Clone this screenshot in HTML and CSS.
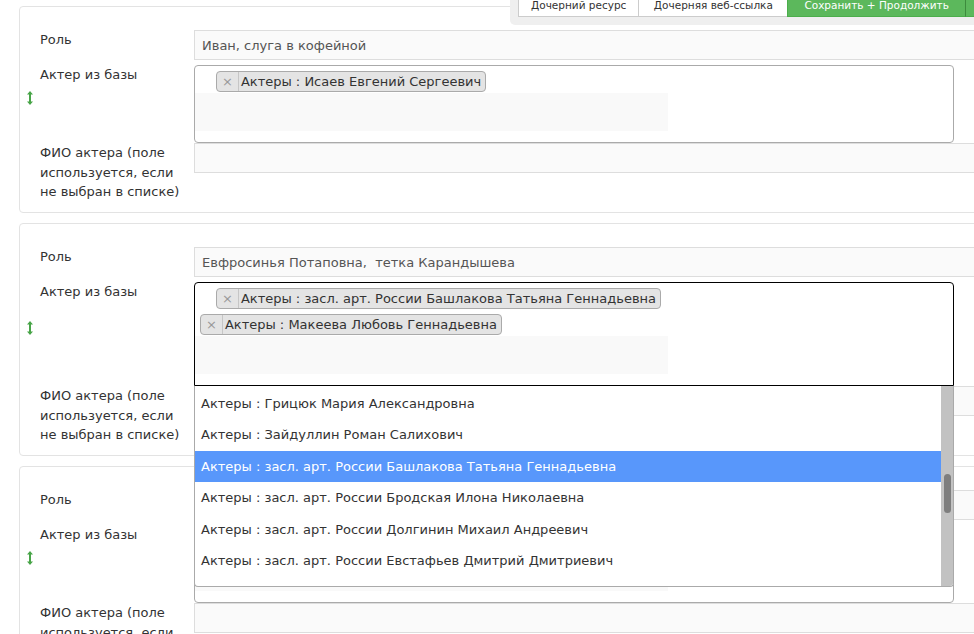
FILE: index.html
```html
<!DOCTYPE html>
<html lang="ru">
<head>
<meta charset="UTF-8">
<meta name="viewport" content="width=device-width, initial-scale=1.0">
<title>Роли спектакля</title>
<link rel="stylesheet" href="styles.css">
</head>
<body>
    <div class="toolbar">
        <button class="tb-btn">Дочерний ресурс</button>
        <button class="tb-btn tb-wide">Дочерняя веб-ссылка</button>
        <button class="tb-btn tb-green tb-wide">Сохранить + Продолжить</button>
        <button class="tb-btn tb-green tb-caret">
            <svg width="9" height="6" viewBox="0 0 9 6"><path d="M1 1 L4.5 4.5 L8 1" fill="none" stroke="#fff" stroke-width="1.6"/></svg>
        </button>
    </div>

    <div class="page">
        <!-- Роль 1 -->
        <div class="panel">
            <div class="row row-text">
                <div class="handle"></div>
                <label class="lbl">Роль</label>
                <div class="field"><input class="text-input" type="text" value="Иван, слуга в кофейной"></div>
            </div>
            <div class="row row-select">
                <div class="handle">
                    <svg width="6" height="14" viewBox="0 0 6 14"><path d="M3 0 L6 3.5 L4 3.5 L4 10.5 L6 10.5 L3 14 L0 10.5 L2 10.5 L2 3.5 L0 3.5 Z" fill="#47a447"/></svg>
                </div>
                <label class="lbl">Актер из базы</label>
                <div class="field">
                    <div class="s2">
                        <div class="s2-tags">
                            <span class="s2-tag first"><span class="s2-x">×</span>Актеры : Исаев Евгений Сергеевич</span>
                        </div>
                        <div class="s2-search"></div>
                    </div>
                </div>
            </div>
            <div class="row">
                <div class="handle"></div>
                <label class="lbl">ФИО актера (поле используется, если не выбран в списке)</label>
                <div class="field"><input class="text-input" type="text" value=""></div>
            </div>
        </div>

        <!-- Роль 2 -->
        <div class="panel">
            <div class="row row-text">
                <div class="handle"></div>
                <label class="lbl">Роль</label>
                <div class="field"><input class="text-input" type="text" value="Евфросинья Потаповна,  тетка Карандышева"></div>
            </div>
            <div class="row row-select">
                <div class="handle">
                    <svg width="6" height="14" viewBox="0 0 6 14"><path d="M3 0 L6 3.5 L4 3.5 L4 10.5 L6 10.5 L3 14 L0 10.5 L2 10.5 L2 3.5 L0 3.5 Z" fill="#47a447"/></svg>
                </div>
                <label class="lbl">Актер из базы</label>
                <div class="field">
                    <div class="s2 open">
                        <div class="s2-tags">
                            <span class="s2-tag first"><span class="s2-x">×</span>Актеры : засл. арт. России Башлакова Татьяна Геннадьевна</span>
                            <span class="s2-tag"><span class="s2-x">×</span>Актеры : Макеева Любовь Геннадьевна</span>
                        </div>
                        <div class="s2-search"></div>

                        <div class="s2-drop">
                            <ul class="s2-options">
                                <li>Актеры : Грицюк Мария Александровна</li>
                                <li>Актеры : Зайдуллин Роман Салихович</li>
                                <li class="active">Актеры : засл. арт. России Башлакова Татьяна Геннадьевна</li>
                                <li>Актеры : засл. арт. России Бродская Илона Николаевна</li>
                                <li>Актеры : засл. арт. России Долгинин Михаил Андреевич</li>
                                <li>Актеры : засл. арт. России Евстафьев Дмитрий Дмитриевич</li>
                                <li>Актеры : засл. арт. России Иванова Ольга Петровна</li>
                            </ul>
                            <div class="s2-track"><div class="s2-thumb"></div></div>
                        </div>
                    </div>
                </div>
            </div>
            <div class="row">
                <div class="handle"></div>
                <label class="lbl">ФИО актера (поле используется, если не выбран в списке)</label>
                <div class="field"><input class="text-input" type="text" value=""></div>
            </div>
        </div>

        <!-- Роль 3 -->
        <div class="panel">
            <div class="row row-text">
                <div class="handle"></div>
                <label class="lbl">Роль</label>
                <div class="field"><input class="text-input" type="text" value="Паратов Сергей Сергеевич"></div>
            </div>
            <div class="row row-select">
                <div class="handle">
                    <svg width="6" height="14" viewBox="0 0 6 14"><path d="M3 0 L6 3.5 L4 3.5 L4 10.5 L6 10.5 L3 14 L0 10.5 L2 10.5 L2 3.5 L0 3.5 Z" fill="#47a447"/></svg>
                </div>
                <label class="lbl">Актер из базы</label>
                <div class="field">
                    <div class="s2">
                        <div class="s2-tags">
                            <span class="s2-tag first"><span class="s2-x">×</span>Актеры : Ляпин Александр Николаевич</span>
                        </div>
                        <div class="s2-search"></div>
                    </div>
                </div>
            </div>
            <div class="row">
                <div class="handle"></div>
                <label class="lbl">ФИО актера (поле используется, если не выбран в списке)</label>
                <div class="field"><input class="text-input" type="text" value=""></div>
            </div>
        </div>
    </div>
</body>
</html>
```

FILE: styles.css
```css
html, body {
    margin: 0;
    padding: 0;
    height: 100%;
    overflow: hidden;
}

body {
    font-family: "DejaVu Sans", Verdana, sans-serif;
    font-size: 13px;
    color: #333;
    background: #fff;
}

/* верхняя панель кнопок */
.toolbar {
    position: fixed;
    top: -7px;
    left: 510px;
    right: 0;
    display: flex;
    padding: 0 0 8px 8px;
    background: #efefef;
    border-radius: 0 0 0 5px;
    overflow: hidden;
    z-index: 20;
}

.tb-btn {
    flex-shrink: 0;
    font-family: "DejaVu Sans", Verdana, sans-serif;
    font-size: 10.5px;
    line-height: 14px;
    padding: 4px 12px;
    margin: 0 0 0 -1px;
    border: 1px solid #ccc;
    background: #fff;
    color: #333;
    white-space: nowrap;
}

.tb-btn:first-child {
    margin-left: 0;
}

.tb-wide {
    padding: 4px 14.5px;
}

.tb-green {
    background: #5cb85c;
    border-color: #4cae4c;
    color: #fff;
}

.tb-green.tb-wide {
    padding: 4px 16px;
}

.tb-caret {
    border-left-color: #3d8b3d;
    padding: 4px 10px;
}

.tb-caret svg {
    display: block;
    margin-top: 5px;
}

/* формы ролей */
.page {
    padding: 6px 0 0 19px;
}

.panel {
    border: 1px solid #e3e3e3;
    border-radius: 4px;
    margin: 0 -60px 10px 0;
    padding: 23px 0 10.5px 0;
    background: #fff;
}

.row {
    display: grid;
    grid-template-columns: 20px 154px 1fr;
}

.row-text {
    margin-bottom: 5px;
}

.handle {
    justify-self: center;
    align-self: center;
    margin-bottom: 12px;
}

.handle svg {
    display: block;
}

.lbl {
    line-height: 19.5px;
    padding-right: 12px;
    color: #333;
}

.text-input {
    display: block;
    width: 100%;
    height: 30px;
    box-sizing: border-box;
    border: 1px solid #ddd;
    background: #fafafa;
    padding: 0 7px;
    margin: 0;
    font-family: "DejaVu Sans", Verdana, sans-serif;
    font-size: 13px;
    color: #555;
    outline: none;
}

/* мультиселект */
.s2 {
    position: relative;
    width: 760px;
    box-sizing: border-box;
    border: 1px solid #aaa;
    border-radius: 4px;
    background: #fff;
}

.s2.open {
    border-color: #000;
    border-radius: 4px 4px 0 0;
    z-index: 10;
}

.s2-tags {
    display: flex;
    flex-wrap: wrap;
    padding: 0 5px;
}

.s2-tag {
    display: flex;
    align-items: center;
    height: 21px;
    box-sizing: border-box;
    margin: 5px 5px 0 0;
    padding-right: 4px;
    border: 1px solid #aaa;
    border-radius: 4px;
    background: #e4e4e4;
    line-height: 19px;
    color: #333;
    white-space: nowrap;
}

.s2-tag.first {
    margin-left: 16px;
}

.s2-x {
    padding: 0 5px;
    margin-right: 2px;
    border-right: 1px solid #c6c6c6;
    color: #999;
}

.s2-search {
    width: 473px;
    height: 38px;
    margin: 1px 0 11px 0;
    background: #f9f9f9;
}

.s2-drop {
    position: absolute;
    top: calc(100% + 1px);
    left: -1px;
    right: -1px;
    height: 201px;
    box-sizing: border-box;
    display: flex;
    border: 1px solid #aaa;
    border-top: 0;
    border-radius: 0 0 4px 4px;
    background: #fff;
    overflow: hidden;
}

.s2-options {
    flex: 1;
    list-style: none;
    margin: 0;
    padding: 2px 0 0 0;
    overflow: hidden;
}

.s2-options li {
    padding: 6px;
    line-height: 19.4px;
    color: #333;
    white-space: nowrap;
}

.s2-options li.active {
    background: #5897fb;
    color: #fff;
}

.s2-track {
    width: 12px;
    background: #c2c2c2;
}

.s2-thumb {
    width: 7px;
    height: 39px;
    margin: 88px auto 0;
    border-radius: 4px;
    background: #7e7e7e;
}
```
